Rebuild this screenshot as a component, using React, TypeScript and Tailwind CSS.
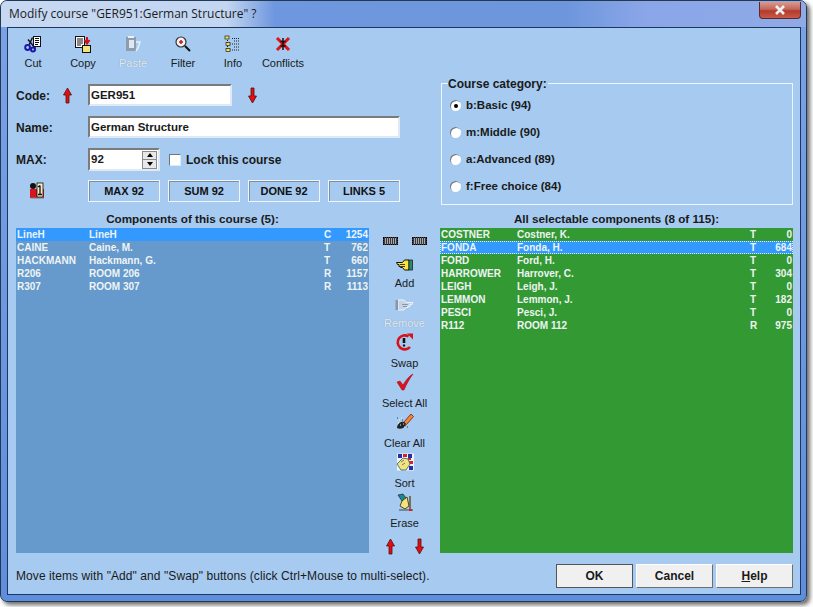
import React from "react";

type Row = [string, string, string, number];

const courseRows: Row[] = [
  ["LineH", "LineH", "C", 1254],
  ["CAINE", "Caine, M.", "T", 762],
  ["HACKMANN", "Hackmann, G.", "T", 660],
  ["R206", "ROOM 206", "R", 1157],
  ["R307", "ROOM 307", "R", 1113],
];

const selectableRows: Row[] = [
  ["COSTNER", "Costner, K.", "T", 0],
  ["FONDA", "Fonda, H.", "T", 684],
  ["FORD", "Ford, H.", "T", 0],
  ["HARROWER", "Harrover, C.", "T", 304],
  ["LEIGH", "Leigh, J.", "T", 0],
  ["LEMMON", "Lemmon, J.", "T", 182],
  ["PESCI", "Pesci, J.", "T", 0],
  ["R112", "ROOM 112", "R", 975],
];

function Icon({ children, w = 18, h = 18 }: { children: React.ReactNode; w?: number; h?: number }) {
  return (
    <svg width={w} height={h} viewBox={`0 0 ${w} ${h}`} className="block shrink-0">
      {children}
    </svg>
  );
}

function CutIcon() {
  return (
    <Icon>
      <rect x="9.5" y="1.5" width="7" height="10" fill="#fff" stroke="#111" />
      <path d="M11 3.5h4M11 5.5h4M11 7.5h4M11 9.5h3" stroke="#111" />
      <path d="M8.5 2.5 5 10M4 4.5l7.5 9" stroke="#111827" strokeWidth="1.5" />
      <circle cx="3.6" cy="12.5" r="2.4" fill="none" stroke="#1a1aa8" strokeWidth="2" />
      <circle cx="9" cy="14.5" r="2" fill="none" stroke="#1a1aa8" strokeWidth="2" />
    </Icon>
  );
}

function CopyIcon() {
  return (
    <Icon>
      <rect x="1.5" y="1.5" width="9" height="11" fill="#fff" stroke="#111" />
      <path d="M3 4h6M3 6h6M3 8h6M3 10h4" stroke="#111" />
      <rect x="8.5" y="10.5" width="8" height="7" fill="#f6e27a" stroke="#111" />
      <path d="M13 2v5M10.5 5l2.5 3.5L15.5 5" stroke="#d0101a" strokeWidth="2" fill="none" />
    </Icon>
  );
}

function PasteIcon() {
  return (
    <Icon>
      <rect x="2" y="2" width="10" height="14" fill="#8f9cab" />
      <rect x="5" y="5" width="5" height="8" fill="#dfe8f2" />
      <path d="M12 7h4l-2 6-2 3" stroke="#e8f1fa" strokeWidth="1.4" fill="none" />
      <path d="M4 1h6v2H4z" fill="#e8f1fa" />
    </Icon>
  );
}

function FilterIcon() {
  return (
    <Icon>
      <circle cx="7" cy="7" r="5" fill="#f4f4f4" stroke="#333" strokeWidth="1.2" />
      <path d="M5 7h4M7 5v4" stroke="#d01020" strokeWidth="1.5" />
      <path d="M11 11l5 5" stroke="#111" strokeWidth="2" />
    </Icon>
  );
}

function InfoIcon() {
  return (
    <Icon>
      <path d="M3.5 3v13M3.5 9h3M3.5 15h3" stroke="#111" strokeDasharray="1 1" />
      <rect x="1" y="1" width="4" height="3" fill="#f4e04a" stroke="#222" strokeWidth=".7" />
      <rect x="2" y="7.5" width="4" height="3" fill="#f4e04a" stroke="#222" strokeWidth=".7" />
      <rect x="2" y="13.5" width="4" height="3" fill="#f4e04a" stroke="#222" strokeWidth=".7" />
      <path d="M8 3.5h8M8 9h8M8 15h8M10 6h6M10 12h6" stroke="#222" strokeDasharray="1 1" />
    </Icon>
  );
}

function ConflictsIcon() {
  return (
    <Icon>
      <path d="M3 3l12 12M15 3 3 15" stroke="#dc1414" strokeWidth="3" />
      <path d="M9 3v12M6.5 6.5h5M6.5 11h5" stroke="#111" strokeWidth="1.5" />
    </Icon>
  );
}

function UpArrow() {
  return (
    <svg width="11" height="17" viewBox="0 0 11 17" className="block shrink-0">
      <path d="M5.5 1 9.5 8H7V16H4V8H1.5Z" fill="#e01010" stroke="#5a0c10" strokeWidth=".8" />
    </svg>
  );
}

function DownArrow() {
  return (
    <svg width="11" height="17" viewBox="0 0 11 17" className="block shrink-0">
      <path d="M5.5 16 9.5 9H7V1H4V9H1.5Z" fill="#e01010" stroke="#5a0c10" strokeWidth=".8" />
    </svg>
  );
}

function CourseIcon() {
  return (
    <Icon>
      <circle cx="5" cy="4" r="3" fill="#111" />
      <rect x="2" y="7" width="14" height="9" fill="#d8141c" />
      <rect x="9" y="1" width="6" height="14" fill="#f2efc8" stroke="#111" strokeWidth=".8" />
      <path d="M12 3.5v9M10 5l2-1.5M10 12.5h4" stroke="#111" strokeWidth="1.3" />
      <path d="M3 16h13" stroke="#777" />
    </Icon>
  );
}

function AddIcon() {
  return (
    <svg width="17" height="12" viewBox="0 0 17 12" className="block">
      <path d="M.5 3.5h6l2-2.5h4.500v10H8.500L6.500 8.500h-2v-1H3v-2H1.500Z" fill="#f8e43a" stroke="#111" strokeWidth="1" />
      <path d="M4 5.500h5M5 7.500h4" stroke="#111" strokeWidth=".8" />
      <rect x="13" y="1" width="3.500" height="10" fill="#2a8a70" stroke="#111" strokeWidth=".7" />
    </svg>
  );
}

function RemoveIcon() {
  return (
    <svg width="19" height="12" viewBox="0 0 19 12" className="block">
      <path d="M18 3.500h-7L9 1H3v10h6l2-2.500h2v-1h2v-2h2Z" fill="#c4d4e6" stroke="#eaf2fa" strokeWidth="1" />
      <rect x="0.500" y="1" width="2.500" height="10" fill="#8796a8" />
      <path d="M7 5.500h6M8 7.500h4" stroke="#8796a8" />
    </svg>
  );
}

function SwapIcon() {
  return (
    <Icon w={19} h={18}>
      <path d="M15 14A7 7 0 1 1 13.500 3.500" fill="none" stroke="#d8101c" strokeWidth="2.600" />
      <path d="M12 0.500h6v6Z" fill="#d8101c" />
      <path d="M9 5v5" stroke="#111" strokeWidth="2.600" />
      <path d="M9 11.500v2" stroke="#111" strokeWidth="2.200" />
    </Icon>
  );
}

function CheckIcon() {
  return (
    <Icon>
      <path d="M1 9l3-1 3 4C10 7 13 3 17 1c-3 4-6 9-9 16H6Z" fill="#e0101c" stroke="#8a0c14" strokeWidth=".5" />
    </Icon>
  );
}

function ClearIcon() {
  return (
    <Icon>
      <path d="M8 9 15 1l2.500 2.500-7 8Z" fill="#f08a30" stroke="#7c1010" strokeWidth=".8" />
      <path d="M1 15c0-4 4-7 7-6l2 3c-1 3-6 5-9 3Z" fill="#222" />
      <path d="M4 12h1M7 11h1M3 7h1M2 10h1M5 5h1M8 14h1" stroke="#eee" />
      <path d="M1 5h1M6 7h1M11 14h1" stroke="#333" />
    </Icon>
  );
}

function SortIcon() {
  return (
    <Icon>
      <rect x="1" y="0.500" width="17" height="17" fill="#f2f2f2" />
      <path d="M2 1h4v4H2zM12 1h4v4h-4z" fill="#2230a8" />
      <path d="M7 1h4v3H7zM13 8h4v3h-4zM12 5h3v2h-3z" fill="#d8202a" />
      <path d="M13 13h4v4h-4z" fill="#2230a8" />
      <path d="M1 11l6-6 5 1 2 5-4 6H5Z" fill="#f6e27a" stroke="#3a6a70" strokeWidth=".9" />
      <path d="M5 9l3-2M6 12l3-2" stroke="#3a6a70" strokeWidth=".8" />
    </Icon>
  );
}

function EraseIcon() {
  return (
    <Icon>
      <path d="M2 2l5-1 3 4-4 3Z" fill="#1c8a8c" stroke="#111" strokeWidth=".6" />
      <path d="M6 8l5-4 2 9-4 3-5-3Z" fill="#f6e27a" stroke="#3a3a20" strokeWidth=".9" />
      <path d="M14 3v13" stroke="#6a4a10" strokeWidth="1.400" />
      <path d="M3 17h14" stroke="#444" />
      <path d="M13 16h3v2h-3z" fill="#d8202a" />
    </Icon>
  );
}

function DottedBox() {
  return (
    <div className="w-[15px] h-[8px] border border-dotted border-black [background-image:repeating-linear-gradient(90deg,#3a3a3a_0_1px,#a8a8a8_1px_2px)]" />
  );
}

function ToolButton({ label, icon, off }: { label: string; icon: React.ReactNode; off?: boolean }) {
  return (
    <div className="w-[50px] flex flex-col items-center">
      <div className="h-[18px]">{icon}</div>
      <span className={`mt-[4px] text-[11px] leading-[13px] whitespace-nowrap ${off ? "text-[#dfe9f4] [text-shadow:0_0_1px_#8a98a8]" : "text-[#1a1a1a]"}`}>
        {label}
      </span>
    </div>
  );
}

function MiddleButton({ label, icon, off }: { label: string; icon: React.ReactNode; off?: boolean }) {
  return (
    <div className="h-[40px] flex flex-col items-center justify-end">
      <div className="h-[18px] flex items-end justify-center">{icon}</div>
      <span className={`mt-[6px] mb-[3px] text-[11px] leading-[13px] whitespace-nowrap ${off ? "text-[#dfe9f4] [text-shadow:0_0_1px_#8a98a8]" : "text-[#1a1a1a]"}`}>
        {label}
      </span>
    </div>
  );
}

function CountButton({ label }: { label: string }) {
  return (
    <div className="w-[72px] h-[22px] flex items-center justify-center border border-[#eef5fc] shadow-[inset_1px_1px_0_#7f8fa3] text-[11px] font-bold text-[#111]">
      {label}
    </div>
  );
}

function Radio({ label, checked }: { label: string; checked?: boolean }) {
  return (
    <div className="h-[27px] flex items-center">
      <div className="w-[11px] h-[11px] rounded-full bg-white shadow-[inset_1px_1px_0_#6c7684] flex items-center justify-center">
        {checked && <div className="w-[4px] h-[4px] rounded-full bg-black" />}
      </div>
      <span className="ml-[5px] text-[11.5px] font-bold text-[#1a1a1a]">{label}</span>
    </div>
  );
}

function ListBox({
  rows,
  selected,
  bg,
  keyWidth,
  typeWidth,
  focus,
}: {
  rows: Row[];
  selected: number;
  bg: string;
  keyWidth: string;
  typeWidth: string;
  focus?: boolean;
}) {
  return (
    <div className={`w-[353px] h-[325px] ${bg} text-[10px] font-bold leading-[14px] text-[#eef4f4]`}>
      {rows.map((r, i) => (
        <div
          key={r[0]}
          className={`h-[13px] flex pl-[1px] pr-[1px] ${i === selected ? "bg-[#3399ff]" : ""} ${i === selected && focus ? "outline outline-1 -outline-offset-1 outline-dotted outline-[#dfefff]" : ""}`}
        >
          <span className={keyWidth}>{r[0]}</span>
          <span className="flex-1">{r[1]}</span>
          <span className={typeWidth}>{r[2]}</span>
          <span className="w-[24px] text-right">{r[3]}</span>
        </div>
      ))}
    </div>
  );
}

function DialogButton({ children, strong }: { children: React.ReactNode; strong?: boolean }) {
  return (
    <div className={`w-[77px] h-[24px] flex items-center justify-center bg-[#f0f0f0] border text-[12px] font-bold text-[#1a1a1a] ${strong ? "border-[#555]" : "border-t-white border-l-white border-r-[#6e6e6e] border-b-[#6e6e6e]"}`}>
      {children}
    </div>
  );
}

export default function App() {
  return (
    <div className="w-[813px] h-[607px] bg-white font-['Liberation_Sans',Arial,sans-serif] overflow-hidden">
      <div className="relative w-[807px] h-[602px] flex flex-col rounded-[7px] border border-[#24384f] bg-[linear-gradient(180deg,#7ba3e6_0%,#5f8edc_100%)] shadow-[3px_3px_4px_rgba(60,60,60,0.75)]">
        {/* Title bar */}
        <div className="h-[26px] shrink-0 flex items-center justify-between rounded-t-[6px] bg-[linear-gradient(90deg,#c6d8f2_0%,#c3d6f1_28%,#6e97df_34%,#6d96dc_70%,#8aa6e8_80%,#8faae6_100%)]">
          <span className="pl-[8px] text-[12px] text-[#1c1c1c] font-['Open_Sans',sans-serif]">
            Modify course "GER951:German Structure" ?
          </span>
          <div className="w-[42px] h-[17px] mr-[5px] -mt-[8px] flex items-center justify-center rounded-b-[4px] border border-t-0 border-[#5a2a2a] bg-[linear-gradient(180deg,#d79a8f_0%,#c4665a_45%,#b43a2c_55%,#c65a48_100%)]">
            <svg width="12" height="10" viewBox="0 0 12 10">
              <path d="M2 1l8 8M10 1 2 9" stroke="#eef0f0" strokeWidth="2.600" />
            </svg>
          </div>
        </div>

        {/* Client area */}
        <div className="ml-[6px] mr-[5px] mb-[6px] flex-1 flex flex-col border border-[#1e3560] bg-[#a6caf0]">
          <div className="flex pt-[7px]">
            <ToolButton label="Cut" icon={<CutIcon />} />
            <ToolButton label="Copy" icon={<CopyIcon />} />
            <ToolButton label="Paste" icon={<PasteIcon />} off />
            <ToolButton label="Filter" icon={<FilterIcon />} />
            <ToolButton label="Info" icon={<InfoIcon />} />
            <ToolButton label="Conflicts" icon={<ConflictsIcon />} />
          </div>

          <div className="flex pl-[8px] mt-[14px]">
            {/* Course form */}
            <div className="w-[384px] flex flex-col gap-[10px]">
              <div className="h-[22px] flex items-center">
                <span className="w-[46px] pt-[2px] text-[12px] font-bold text-[#1a1a1a]">Code:</span>
                <UpArrow />
                <div className="ml-[15px] w-[144px] h-[22px] flex items-center pl-[1px] pt-[1px] bg-white border-2 border-t-[#7b7b7b] border-l-[#7b7b7b] border-r-[#dfeaf6] border-b-[#dfeaf6] text-[11.5px] font-bold text-[#1a1a1a]">
                  GER951
                </div>
                <div className="ml-[15px]">
                  <DownArrow />
                </div>
              </div>
              <div className="h-[22px] flex items-center">
                <span className="w-[72px] pt-[1px] text-[12px] font-bold text-[#1a1a1a]">Name:</span>
                <div className="w-[312px] h-[22px] flex items-center pl-[1px] pt-[1px] bg-white border-2 border-t-[#7b7b7b] border-l-[#7b7b7b] border-r-[#dfeaf6] border-b-[#dfeaf6] text-[11.5px] font-bold text-[#1a1a1a]">
                  German Structure
                </div>
              </div>
              <div className="h-[23px] flex items-center">
                <span className="w-[72px] text-[12px] font-bold text-[#1a1a1a]">MAX:</span>
                <div className="w-[72px] h-[23px] flex items-center justify-between pl-[1px] pr-[1px] bg-white border-2 border-t-[#7b7b7b] border-l-[#7b7b7b] border-r-[#dfeaf6] border-b-[#dfeaf6] text-[11.5px] font-bold text-[#1a1a1a]">
                  92
                  <div className="w-[15px] h-[18px] flex flex-col bg-[#e8e8e8] border border-[#8a8a8a]">
                    <div className="flex-1 flex items-center justify-center border-b border-[#8a8a8a]">
                      <div className="w-0 h-0 border-x-[3.5px] border-x-transparent border-b-[4px] border-b-black" />
                    </div>
                    <div className="flex-1 flex items-center justify-center">
                      <div className="w-0 h-0 border-x-[3.5px] border-x-transparent border-t-[4px] border-t-black" />
                    </div>
                  </div>
                </div>
                <div className="ml-[9px] w-[12px] h-[12px] bg-white border border-t-[#6c7684] border-l-[#6c7684] border-r-[#dfeaf6] border-b-[#dfeaf6]" />
                <span className="ml-[5px] text-[12px] font-bold text-[#1a1a1a]">Lock this course</span>
              </div>
              <div className="-mt-px flex items-center">
                <div className="w-[72px] pl-[12px]">
                  <CourseIcon />
                </div>
                <div className="flex gap-[8px]">
                  <CountButton label="MAX 92" />
                  <CountButton label="SUM 92" />
                  <CountButton label="DONE 92" />
                  <CountButton label="LINKS 5" />
                </div>
              </div>
            </div>

            {/* Course category */}
            <div className="ml-[41px] w-[352px] h-[122px] -mt-px pl-[8px] border border-[#eef5fc]">
              <div className="-mt-[7px] -ml-[2px] w-fit h-[14px] pr-[1px] bg-[#a6caf0] text-[12px] leading-[14px] font-bold text-[#1a1a1a]">
                Course category:
              </div>
              <div className="mt-[1px]">
                <Radio label="b:Basic (94)" checked />
                <Radio label="m:Middle (90)" />
                <Radio label="a:Advanced (89)" />
                <Radio label="f:Free choice (84)" />
              </div>
            </div>
          </div>

          {/* Lists */}
          <div className="flex pl-[8px] mt-[7px]">
            <div className="flex flex-col">
              <div className="h-[14px] mb-[2px] text-center text-[11.7px] leading-[14px] font-bold text-[#1a1a1a]">
                Components of this course (5):
              </div>
              <ListBox rows={courseRows} selected={0} bg="bg-[#6699cc]" keyWidth="w-[72px]" typeWidth="w-[20px]" />
            </div>
            <div className="w-[71px] flex flex-col items-center pt-[23px]">
              <div className="flex gap-[14px] h-[11px] items-center">
                <DottedBox />
                <DottedBox />
              </div>
              <div className="mt-[7px]" />
              <MiddleButton label="Add" icon={<AddIcon />} />
              <MiddleButton label="Remove" icon={<RemoveIcon />} off />
              <MiddleButton label="Swap" icon={<SwapIcon />} />
              <MiddleButton label="Select All" icon={<CheckIcon />} />
              <MiddleButton label="Clear All" icon={<ClearIcon />} />
              <MiddleButton label="Sort" icon={<SortIcon />} />
              <MiddleButton label="Erase" icon={<EraseIcon />} />
              <div className="mt-[5px] flex gap-[18px]">
                <UpArrow />
                <DownArrow />
              </div>
            </div>
            <div className="flex flex-col">
              <div className="h-[14px] mb-[2px] text-center text-[11.7px] leading-[14px] font-bold text-[#1a1a1a]">
                All selectable components (8 of 115):
              </div>
              <ListBox rows={selectableRows} selected={1} bg="bg-[#339933]" keyWidth="w-[76px]" typeWidth="w-[18px]" focus />
            </div>
          </div>

          {/* Footer */}
          <div className="flex items-center justify-between pl-[8px] pr-[7px] mt-[9px]">
            <span className="text-[12px] tracking-[0.08px] text-[#1a1a1a]">
              Move items with "Add" and "Swap" buttons (click Ctrl+Mouse to multi-select).
            </span>
            <div className="flex gap-[3px]">
              <DialogButton strong>OK</DialogButton>
              <DialogButton>Cancel</DialogButton>
              <DialogButton>
                <span className="underline">H</span>elp
              </DialogButton>
            </div>
          </div>
        </div>
      </div>
    </div>
  );
}
